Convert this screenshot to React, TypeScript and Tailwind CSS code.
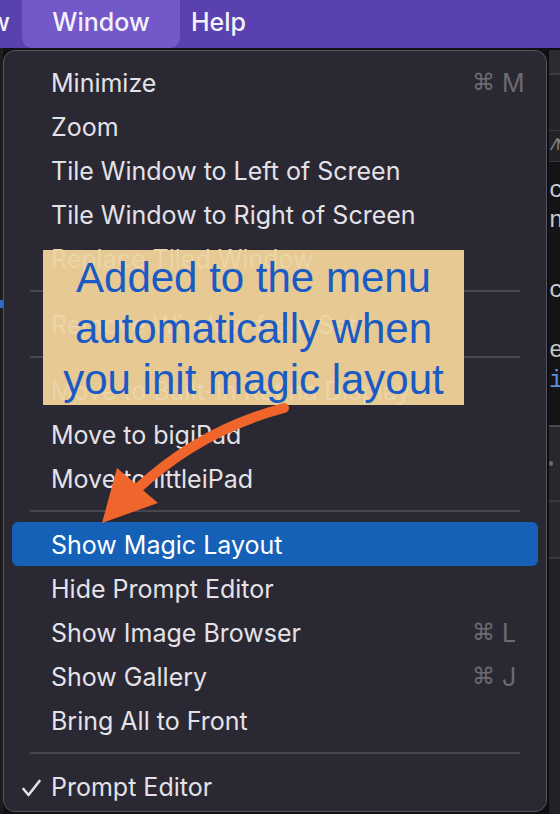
import React from 'react'

type Row =
  | { kind: 'sep' }
  | {
      kind: 'item'
      label: string
      keyChar?: string
      dim?: boolean
      active?: boolean
      checked?: boolean
    }

const rows: Row[] = [
  { kind: 'item', label: 'Minimize', keyChar: 'M' },
  { kind: 'item', label: 'Zoom' },
  { kind: 'item', label: 'Tile Window to Left of Screen' },
  { kind: 'item', label: 'Tile Window to Right of Screen' },
  { kind: 'item', label: 'Replace Tiled Window', dim: true },
  { kind: 'sep' },
  { kind: 'item', label: 'Remove Window from Set', dim: true },
  { kind: 'sep' },
  { kind: 'item', label: 'Move to Built-in Retina Display', dim: true },
  { kind: 'item', label: 'Move to bigiPad' },
  { kind: 'item', label: 'Move to littleiPad' },
  { kind: 'sep' },
  { kind: 'item', label: 'Show Magic Layout', active: true },
  { kind: 'item', label: 'Hide Prompt Editor' },
  { kind: 'item', label: 'Show Image Browser', keyChar: 'L' },
  { kind: 'item', label: 'Show Gallery', keyChar: 'J' },
  { kind: 'item', label: 'Bring All to Front' },
  { kind: 'sep' },
  { kind: 'item', label: 'Prompt Editor', checked: true },
]

function MenuBar() {
  return (
    <div className="flex h-[48px] shrink-0 items-stretch bg-[#5a41b0] text-[25px] font-medium text-[#f3f1fa]">
      <div className="flex w-[22px] items-center justify-end overflow-hidden pr-[12px] pb-[2px]">
        <span className="whitespace-nowrap">View</span>
      </div>
      <div className="flex w-[158px] items-center justify-center rounded-b-[10px] bg-[#7358c9] pb-[2px]">
        Window
      </div>
      <div className="ml-[11px] flex items-center pb-[2px]">Help</div>
    </div>
  )
}

function CheckMark() {
  return (
    <svg width="19" height="19" viewBox="0 0 19 19" fill="none">
      <path d="M1.5 10 L6.5 16 L17.5 2" stroke="#e4e2e8" strokeWidth="2.6" strokeLinecap="round" strokeLinejoin="round" />
    </svg>
  )
}

function MenuRow({ row }: { row: Row }) {
  if (row.kind === 'sep') {
    return (
      <div className="flex h-[22px] items-center px-[18px]">
        <div className="h-[2px] w-full bg-[#47454e]" />
      </div>
    )
  }
  const tone = row.active
    ? 'bg-[#1561b8] text-white'
    : row.dim
      ? 'text-[#ecd5a6]'
      : 'text-[#e4e2e8]'
  return (
    <div className={`flex h-[44px] items-center rounded-[6px] pt-[4px] ${tone}`}>
      <div className="flex w-[39px] pl-[10px]">{row.checked && <CheckMark />}</div>
      <div className={`flex-1 whitespace-nowrap ${row.dim ? 'relative z-[5]' : ''}`}>{row.label}</div>
      <div className="flex w-[66px] gap-[7px] text-[#6c6a72]">
        {row.keyChar && (
          <>
            <span className="font-['DejaVu_Sans',sans-serif] text-[23px]">⌘</span>
            <span>{row.keyChar}</span>
          </>
        )}
      </div>
    </div>
  )
}

function WindowEdge() {
  return (
    <div className="flex min-w-0 flex-1 flex-col overflow-hidden bg-[#0e0e10] pl-[2px] font-['Liberation_Mono',monospace]">
      <div className="h-[2px]" />
      <div className="h-[23px] bg-[#2c2b30]" />
      <div className="h-[2px] bg-[#3d3c42]" />
      <div className="h-[55px] bg-[#242327]" />
      <div className="h-[1px] bg-[#3a3a3e]" />
      <div className="h-[30px] whitespace-nowrap bg-[#232226] pt-[3px] text-[17px] leading-[24px] tracking-[-3px] text-[#8a8a8e]">
        /M
      </div>
      <div className="h-[1px] bg-[#3a3a3e]" />
      <div className="flex h-[263px] flex-col bg-[#141416] pt-[14px] text-[24px] leading-[30px] text-[#c9c9cc]">
        <span>c</span>
        <span>n</span>
        <span className="mt-[40px]">c</span>
        <span className="mt-[30px]">e</span>
        <span className="text-[#5b8fd9]">i</span>
      </div>
      <div className="h-[2px] bg-[#4a4a4e]" />
      <div className="flex h-[73px] items-center bg-[#28272b]">
        <div className="h-[5px] w-[4px] rounded-full bg-[#6a6a6e]" />
      </div>
      <div className="h-[2px] bg-[#3a3a3e]" />
      <div className="h-[55px] bg-[#28272b]" />
      <div className="h-[2px] bg-[#3a3a3e]" />
      <div className="flex-1 bg-[#222125]" />
    </div>
  )
}

export default function App() {
  return (
    <div className="relative flex h-[814px] w-[560px] flex-col overflow-hidden bg-[#111113] font-['Inter',sans-serif]">
      <MenuBar />
      <div className="flex flex-1">
        <div className="flex w-[3px] shrink-0 flex-col bg-[#1c1c1f]">
          <div className="mt-[252px] h-[8px] bg-[#2f6ac4]" />
        </div>
        <div className="mt-[2px] h-[762px] w-[544px] shrink-0 rounded-[12px] border border-[#56545c] bg-[#2a2832] px-[8px] pt-[9px] text-[25px]">
          {rows.map((row, i) => (
            <MenuRow key={i} row={row} />
          ))}
        </div>
        <WindowEdge />
      </div>

      {/* annotation callout */}
      <div className="absolute left-[43px] top-[250px] h-[155px] w-[421px] bg-[#e6c993] pt-[2px] text-center font-['Liberation_Sans',Arial,sans-serif] text-[42px] leading-[51px] text-[#1a5ac4]">
        <div className="relative z-[6]">Added to the menu</div>
        <div className="relative z-[6]">automatically when</div>
        <div className="relative z-[6]">you init magic layout</div>
      </div>

      <svg
        className="pointer-events-none absolute left-0 top-0 z-[7]"
        width="560"
        height="814"
        viewBox="0 0 560 814"
      >
        <path d="M284 408 Q200 430 136 490" fill="none" stroke="#f0652b" strokeWidth="10" strokeLinecap="round" />
        <polygon points="102,523 117,468 158,503" fill="#f0652b" />
      </svg>
    </div>
  )
}
